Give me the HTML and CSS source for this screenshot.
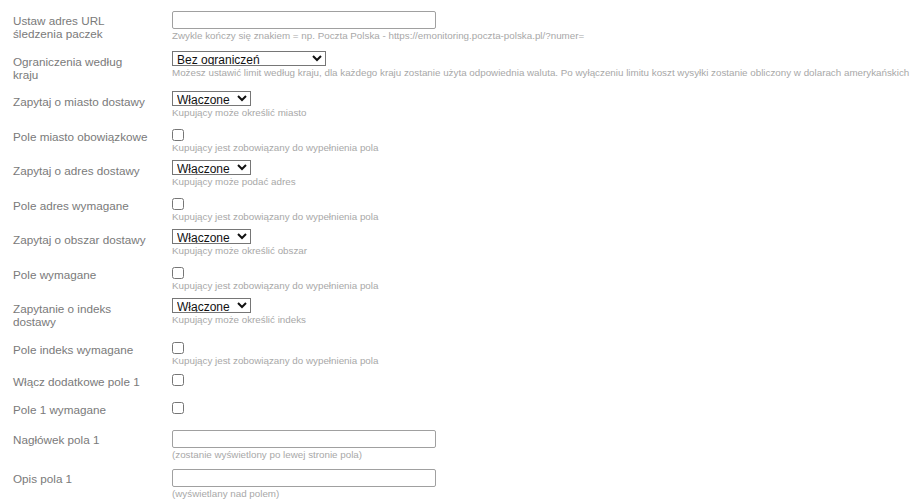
FILE: index.html
```html
<!DOCTYPE html>
<html lang="pl">
<head>
<meta charset="utf-8">
<title>Ustawienia wysyłki</title>
<link rel="stylesheet" href="styles.css">
</head>
<body>
<div class="form">
  <div class="row">
    <label class="label">Ustaw adres URL<br>śledzenia paczek</label>
    <div class="field">
      <input class="text" type="text">
      <div class="hint">Zwykle kończy się znakiem = np. Poczta Polska - https://emonitoring.poczta-polska.pl/?numer=</div>
    </div>
  </div>
  <div class="row">
    <label class="label">Ograniczenia według<br>kraju</label>
    <div class="field">
      <select class="select wide"><option>Bez ograniczeń</option></select>
      <div class="hint">Możesz ustawić limit według kraju, dla każdego kraju zostanie użyta odpowiednia waluta. Po wyłączeniu limitu koszt wysyłki zostanie obliczony w dolarach amerykańskich</div>
    </div>
  </div>
  <div class="row">
    <label class="label">Zapytaj o miasto dostawy</label>
    <div class="field">
      <select class="select"><option>Włączone</option><option>Wyłączone</option></select>
      <div class="hint">Kupujący może określić miasto</div>
    </div>
  </div>
  <div class="row">
    <label class="label">Pole miasto obowiązkowe</label>
    <div class="field">
      <input class="check" type="checkbox">
      <div class="hint">Kupujący jest zobowiązany do wypełnienia pola</div>
    </div>
  </div>
  <div class="row">
    <label class="label">Zapytaj o adres dostawy</label>
    <div class="field">
      <select class="select"><option>Włączone</option><option>Wyłączone</option></select>
      <div class="hint">Kupujący może podać adres</div>
    </div>
  </div>
  <div class="row">
    <label class="label">Pole adres wymagane</label>
    <div class="field">
      <input class="check" type="checkbox">
      <div class="hint">Kupujący jest zobowiązany do wypełnienia pola</div>
    </div>
  </div>
  <div class="row">
    <label class="label">Zapytaj o obszar dostawy</label>
    <div class="field">
      <select class="select"><option>Włączone</option><option>Wyłączone</option></select>
      <div class="hint">Kupujący może określić obszar</div>
    </div>
  </div>
  <div class="row">
    <label class="label">Pole wymagane</label>
    <div class="field">
      <input class="check" type="checkbox">
      <div class="hint">Kupujący jest zobowiązany do wypełnienia pola</div>
    </div>
  </div>
  <div class="row">
    <label class="label">Zapytanie o indeks<br>dostawy</label>
    <div class="field">
      <select class="select"><option>Włączone</option><option>Wyłączone</option></select>
      <div class="hint">Kupujący może określić indeks</div>
    </div>
  </div>
  <div class="row">
    <label class="label">Pole indeks wymagane</label>
    <div class="field">
      <input class="check" type="checkbox">
      <div class="hint">Kupujący jest zobowiązany do wypełnienia pola</div>
    </div>
  </div>
  <div class="row plain">
    <label class="label">Włącz dodatkowe pole 1</label>
    <div class="field">
      <input class="check" type="checkbox">
    </div>
  </div>
  <div class="row plain">
    <label class="label">Pole 1 wymagane</label>
    <div class="field">
      <input class="check" type="checkbox">
    </div>
  </div>
  <div class="row">
    <label class="label">Nagłówek pola 1</label>
    <div class="field">
      <input class="text" type="text">
      <div class="hint">(zostanie wyświetlony po lewej stronie pola)</div>
    </div>
  </div>
  <div class="row">
    <label class="label">Opis pola 1</label>
    <div class="field">
      <input class="text" type="text">
      <div class="hint">(wyświetlany nad polem)</div>
    </div>
  </div>
</div>
</body>
</html>
```
FILE: styles.css
```css
html, body {
  margin: 0;
  padding: 0;
  background: #ffffff;
}

body {
  font-family: "Liberation Sans", Arial, sans-serif;
}

.form {
  display: flex;
  flex-direction: column;
  gap: 7.5px;
  padding: 10px 0 0 13px;
}

.row {
  display: flex;
  align-items: flex-start;
}

.label {
  flex: 0 0 150px;
  margin-right: 9px;
  padding: 4px 0 3px 0;
  min-height: 13px;
  font-size: 11.7px;
  line-height: 13px;
  color: #7a7a7a;
}

.row.plain .label {
  padding: 1.5px 0 6px 0;
}

.field {
  display: flex;
  flex-direction: column;
  align-items: flex-start;
}

.text {
  box-sizing: border-box;
  width: 264px;
  height: 18px;
  margin: 1px 0 0 0;
  padding: 1px 3px;
  border: 1px solid #a0a0a0;
  border-radius: 2px;
  font-family: "Liberation Sans", Arial, sans-serif;
  font-size: 12px;
  background: #fff;
}

.select {
  box-sizing: border-box;
  width: 79px;
  height: 15px;
  margin: 0;
  padding: 0;
  border: 1px solid #767676;
  border-radius: 0;
  font-family: "Liberation Sans", Arial, sans-serif;
  font-size: 12px;
  font-weight: normal;
  color: #111;
  background: #fff;
}

.select.wide {
  width: 154px;
}

.check {
  width: 12px;
  height: 12px;
  margin: 3px 0 0 0;
}

.row.plain .check {
  margin-top: 0.5px;
}

.hint {
  margin-top: 1px;
  font-size: 9.8px;
  line-height: 11px;
  color: #a8a8a8;
  white-space: nowrap;
}
```
